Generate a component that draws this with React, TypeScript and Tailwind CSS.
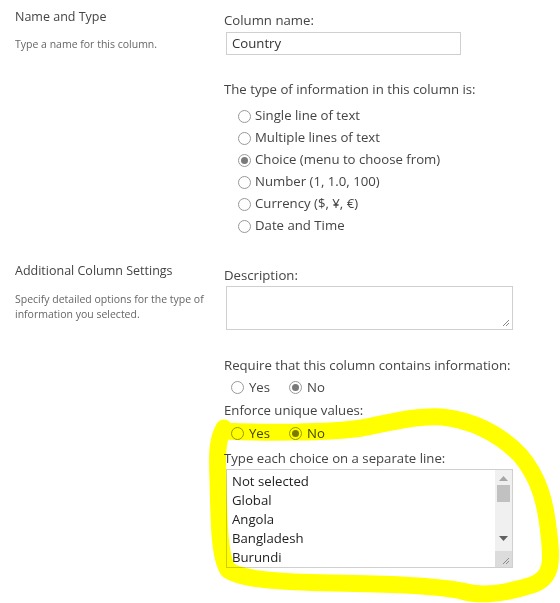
import React from "react";

const types = [
  { label: "Single line of text", checked: false },
  { label: "Multiple lines of text", checked: false },
  { label: "Choice (menu to choose from)", checked: true },
  { label: "Number (1, 1.0, 100)", checked: false },
  { label: "Currency ($, ¥, €)", checked: false },
  { label: "Date and Time", checked: false },
];

const choices = ["Not selected", "Global", "Angola", "Bangladesh", "Burundi"];

function Radio({ checked }: { checked?: boolean }) {
  return (
    <span className="flex h-[13px] w-[13px] shrink-0 items-center justify-center rounded-full border border-[#999] bg-white">
      {checked && <span className="h-[7px] w-[7px] rounded-full bg-[#7a7a7a]" />}
    </span>
  );
}

function YesNo() {
  return (
    <div className="flex h-[22px] items-center pl-[7px]">
      <label className="flex w-[58px] items-center gap-[5px]">
        <Radio />
        <span>Yes</span>
      </label>
      <label className="flex items-center gap-[5px]">
        <Radio checked />
        <span>No</span>
      </label>
    </div>
  );
}

function Grip() {
  return (
    <svg width="8" height="8" viewBox="0 0 8 8" className="absolute bottom-[2px] right-[2px]">
      <path d="M7 1 L1 7 M7 4 L4 7" stroke="#8a8a8a" strokeWidth="1" />
    </svg>
  );
}

export default function App() {
  return (
    <div className="relative h-[603px] w-[560px] overflow-hidden bg-white font-['Open_Sans',sans-serif] text-[13.2px] text-[#444]">
      {/* Name and Type */}
      <section className="flex">
        <div className="w-[224px] pl-[15px] pt-[7px]">
          <h3 className="text-[12.5px] leading-[20px] text-[#444]">Name and Type</h3>
          <p className="mt-[10px] text-[10.5px] leading-[15px] text-[#666]">Type a name for this column.</p>
        </div>
        <div className="flex-1 pt-[10px]">
          <p className="leading-[20px]">Column name:</p>
          <div className="ml-[2px] mt-[2px] flex h-[23px] w-[235px] items-center border border-[#cfcfcf] px-[5px] text-[#333]">
            Country
          </div>
          <p className="mt-[24px] leading-[20px]">The type of information in this column is:</p>
          <div className="mt-[6px] pl-[14px]">
            {types.map((t) => (
              <label key={t.label} className="flex h-[22px] items-center gap-[4px]">
                <Radio checked={t.checked} />
                <span>{t.label}</span>
              </label>
            ))}
          </div>
        </div>
      </section>

      {/* Additional Column Settings */}
      <section className="mt-[18px] flex">
        <div className="w-[224px] pl-[15px] pt-[6px]">
          <h3 className="text-[12.5px] leading-[20px] text-[#444]">Additional Column Settings</h3>
          <p className="mt-[11px] text-[10.5px] leading-[15px] text-[#666]">
            Specify detailed options for the type of information you selected.
          </p>
        </div>
        <div className="flex-1 pt-[10px]">
          <p className="leading-[20px]">Description:</p>
          <div className="relative ml-[2px] mt-[1px] h-[44px] w-[287px] border border-[#cfcfcf] bg-white">
            <Grip />
          </div>
          <p className="mt-[25px] leading-[20px]">Require that this column contains information:</p>
          <div className="mt-[2px]">
            <YesNo />
          </div>
          <p className="mt-[1px] leading-[20px]">Enforce unique values:</p>
          <div className="mt-[3px]">
            <YesNo />
          </div>
          <p className="mt-[3px] leading-[20px]">Type each choice on a separate line:</p>
          <div className="ml-[2px] mt-[1px] flex h-[99px] w-[287px] border border-[#cfcfcf] bg-white">
            <div className="flex-1 overflow-hidden px-[5px] pt-[2px] text-[#222]">
              {choices.map((c) => (
                <div key={c} className="leading-[19px]">
                  {c}
                </div>
              ))}
            </div>
            <div className="relative flex w-[17px] flex-col items-center bg-[#f0f0f0]">
              <svg width="9" height="5" viewBox="0 0 9 5" className="mt-[6px]">
                <path d="M0 5 L4.5 0 L9 5 Z" fill="#a6a6a6" />
              </svg>
              <div className="mt-[4px] h-[17px] w-[13px] bg-[#c1c1c1]" />
              <svg width="9" height="5" viewBox="0 0 9 5" className="mt-[34px]">
                <path d="M0 0 L4.5 5 L9 0 Z" fill="#606060" />
              </svg>
              <div className="mt-auto h-[16px] w-full bg-[#dcdcdc]" />
              <Grip />
            </div>
          </div>
        </div>
      </section>

      {/* freehand highlighter annotation */}
      <svg
        className="pointer-events-none absolute inset-0 mix-blend-multiply"
        width="560"
        height="603"
        viewBox="0 0 560 603"
      >
        <path
          d="M224 431 C260 433 330 433 362 428 C392 422 420 415 442 417 C472 420 500 434 520 455 C540 478 546 505 549 535 C552 560 553 578 532 585 C507 593 482 597 462 591 C432 585 382 584 332 583 C282 582 242 580 228 570 C219 556 219 520 218 480 C217 455 217 440 224 428"
          fill="none"
          stroke="#ffff00"
          strokeWidth="17"
          strokeLinecap="round"
          strokeLinejoin="round"
        />
      </svg>
    </div>
  );
}
